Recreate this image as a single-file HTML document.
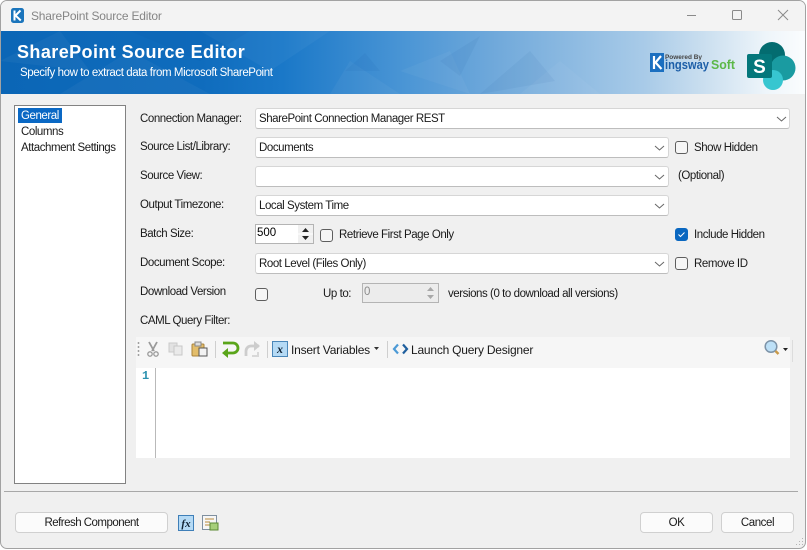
<!DOCTYPE html>
<html><head><meta charset="utf-8">
<style>
html,body{margin:0;padding:0;width:807px;height:550px;overflow:hidden;background:#fff}
*{box-sizing:border-box}
#w{position:absolute;left:0;top:0;width:806px;height:549px;background:#f0f0f0;border-radius:7px;overflow:hidden;border:1px solid #a2a2a2}
#r{position:absolute;left:-1px;top:-1px;width:807px;height:550px;font-family:"Liberation Sans",sans-serif;font-size:11.5px;letter-spacing:-.44px;color:#1a1a1a}
.t{position:absolute;white-space:nowrap;line-height:14px}
.tb{font-size:12px;letter-spacing:-.22px}
.b{position:absolute;background:#fff;border:1px solid #d6d6d6;border-bottom-color:#bdbdbd;border-radius:3px}
.c{position:absolute;width:13px;height:13px;border:1px solid #5e5e5e;border-radius:3px;background:#f6f6f6}
.btn{position:absolute;background:#fbfbfb;border:1px solid #d0d0d0;border-radius:4px;text-align:center;line-height:21px;height:21px;top:512px}
svg{position:absolute;overflow:visible;letter-spacing:0}
</style></head><body>
<div id="w"><div id="r">
<div style="position:absolute;left:0;top:0;width:807px;height:31px;background:#f3f3f3"></div>
<div style="position:absolute;left:0;top:31px;width:807px;height:63px;background:linear-gradient(90deg,#0b66b6 0,#0f6cbd 25%,#1a78c8 35%,#4a95d5 50%,#72aadb 62%,#a9cbe8 80%,#c9deef 87%,#eef5fa 95%,#fbfdfe 100%)"></div>
<svg style="left:0;top:31px" width="660" height="63"><path d="M60 63L130 20 210 63ZM200 0L270 40 330 0ZM0 30L60 0 90 40ZM330 63L350 30 400 63ZM400 40L450 20 470 63ZM520 63L560 30 600 63Z" fill="#fff" opacity=".04"/><path d="M130 0L200 30 250 0ZM345 40L365 22 380 40ZM440 30L480 5 460 45ZM480 63L530 20 555 50Z" fill="#003f80" opacity=".05"/></svg>
<svg style="left:11px;top:8px" width="13" height="15"><rect width="13" height="15" rx="2.500" fill="#1b75bc"/><path d="M3.500 2.500V12.500M9.500 2.500L4.500 7.500 9.800 12.500" stroke="#fff" stroke-width="2" fill="none"/></svg>
<div class="t" style="left:31px;top:9px;color:#858585;font-size:12px;letter-spacing:-.2px">SharePoint Source Editor</div>
<svg style="left:685px;top:9px" width="110" height="14"><path d="M2 6.500H11" stroke="#8a8a8a" stroke-width="1"/><rect x="47.500" y="1.500" width="9" height="9" rx="1" fill="none" stroke="#8a8a8a"/><path d="M93 1L103 11M103 1L93 11" stroke="#8a8a8a"/></svg>
<div class="t" style="left:17px;top:42px;color:#fff;font-size:18px;font-weight:bold;line-height:20px;letter-spacing:.42px">SharePoint Source Editor</div>
<div class="t" style="left:20px;top:66px;color:#fff;font-size:11.5px;letter-spacing:-.41px">Specify how to extract data from Microsoft SharePoint</div>
<svg style="left:649px;top:42px" width="150" height="50">
<rect x="1" y="11" width="14" height="19" fill="#1b6fc0"/><path d="M5 14V27M12 14L6.500 20.500 12.500 27" stroke="#fff" stroke-width="2.200" fill="none"/>
<text x="16" y="17" font-family="Liberation Sans" font-size="6.500" font-weight="bold" fill="#444" textLength="37" lengthAdjust="spacingAndGlyphs">Powered By</text>
<text x="16" y="27" font-family="Liberation Sans" font-size="13" font-weight="bold" fill="#1d5fa8" textLength="44" lengthAdjust="spacingAndGlyphs">ingsway</text>
<text x="62" y="27" font-family="Liberation Sans" font-size="13" font-weight="bold" fill="#5cb848" textLength="24" lengthAdjust="spacingAndGlyphs">Soft</text>
<circle cx="123" cy="13" r="13" fill="#036c70"/><circle cx="134" cy="26" r="12.500" fill="#1a9ba1"/><circle cx="124" cy="38" r="10" fill="#37c6d0"/>
<rect x="98" y="12" width="25" height="24" rx="2" fill="#04777b"/>
<text x="110.500" y="31" text-anchor="middle" font-family="Liberation Sans" font-size="19" font-weight="bold" fill="#fff">S</text></svg>

<div style="position:absolute;left:14px;top:105px;width:112px;height:379px;background:#fff;border:1px solid #828282"></div>
<div style="position:absolute;left:18px;top:108px;width:44px;height:15px;background:#0a68c4"></div>
<div class="t" style="left:21px;top:109px;color:#fff">General</div>
<div class="t" style="left:21px;top:125px">Columns</div>
<div class="t" style="left:21px;top:141px">Attachment Settings</div>

<div class="t" style="left:140px;top:112px">Connection Manager:</div>
<div class="t" style="left:140px;top:140px">Source List/Library:</div>
<div class="t" style="left:140px;top:169px">Source View:</div>
<div class="t" style="left:140px;top:198px">Output Timezone:</div>
<div class="t" style="left:140px;top:227px">Batch Size:</div>
<div class="t" style="left:140px;top:256px">Document Scope:</div>
<div class="t" style="left:140px;top:285px">Download Version</div>
<div class="t" style="left:140px;top:314px">CAML Query Filter:</div>

<div class="b" style="left:255px;top:108px;width:535px;height:21px"></div>
<div class="t" style="left:259px;top:112px">SharePoint Connection Manager REST</div>
<div class="b" style="left:255px;top:137px;width:414px;height:21px"></div>
<div class="t" style="left:259px;top:141px">Documents</div>
<div class="b" style="left:255px;top:166px;width:414px;height:21px"></div>
<div class="b" style="left:255px;top:195px;width:414px;height:21px"></div>
<div class="t" style="left:259px;top:199px">Local System Time</div>
<div class="b" style="left:255px;top:253px;width:414px;height:21px"></div>
<div class="t" style="left:259px;top:257px">Root Level (Files Only)</div>
<svg style="left:0;top:0" width="807" height="300"><path d="M777 117l4.500 4 4.500-4M655 146l4.500 4 4.500-4M655 175l4.500 4 4.500-4M655 204l4.500 4 4.500-4M655 262l4.500 4 4.500-4" stroke="#666" fill="none"/></svg>

<div style="position:absolute;left:255px;top:224px;width:59px;height:20px;background:#fff;border:1px solid #b4b4b4"></div>
<div class="t" style="left:257px;top:226px;color:#000;letter-spacing:0">500</div>
<svg style="left:298px;top:225px" width="15" height="18"><rect width="15" height="18" fill="#f0f0f0"/><path d="M0 9H15" stroke="#fff"/><path d="M7.500 3L4 7H11ZM7.500 15L4 11H11Z" fill="#222"/></svg>
<div class="c" style="left:320px;top:229px"></div>
<div class="t" style="left:339px;top:228px">Retrieve First Page Only</div>

<div class="c" style="left:675px;top:141px"></div>
<div class="t" style="left:694px;top:141px">Show Hidden</div>
<div class="t" style="left:678px;top:169px">(Optional)</div>
<div class="c" style="left:675px;top:228px;background:#0a67c0;border-color:#0a67c0"></div>
<svg style="left:675px;top:228px" width="13" height="13"><path d="M3.500 6.500L5.500 8.500 9.500 4.500" stroke="#fff" fill="none"/></svg>
<div class="t" style="left:694px;top:228px">Include Hidden</div>
<div class="c" style="left:675px;top:257px"></div>
<div class="t" style="left:694px;top:257px">Remove ID</div>

<div class="c" style="left:255px;top:288px"></div>
<div class="t" style="left:323px;top:287px">Up to:</div>
<div style="position:absolute;left:362px;top:283px;width:77px;height:20px;background:#ececec;border:1px solid #b4b4b4"></div>
<div class="t" style="left:364px;top:285px;color:#8c8c8c">0</div>
<svg style="left:423px;top:284px" width="15" height="18"><path d="M7.500 3L4 7H11ZM7.500 15L4 11H11Z" fill="#a8a8a8"/></svg>
<div class="t" style="left:448px;top:287px">versions (0 to download all versions)</div>

<div style="position:absolute;left:136px;top:337px;width:654px;height:31px;background:#f6f6f6"></div>
<div style="position:absolute;left:136px;top:368px;width:654px;height:90px;background:#fff"></div>
<div style="position:absolute;left:155px;top:368px;width:1px;height:90px;background:#b9b9b9"></div>
<div class="t" style="left:142px;top:369px;color:#2b91af;font-weight:bold;font-family:'Liberation Mono',monospace;font-size:12px;letter-spacing:0">1</div>
<svg style="left:136px;top:338px" width="654" height="24">
<path d="M2.500 4v2M2.500 8v2M2.500 12v2M2.500 16v2" stroke="#a0a0a0" stroke-width="1.500"/>
<path d="M13 4l5 9M21 4l-5 9" stroke="#9a9a9a" stroke-width="1.800"/><circle cx="14" cy="16" r="2.200" fill="none" stroke="#9a9a9a" stroke-width="1.300"/><circle cx="20" cy="16" r="2.200" fill="none" stroke="#9a9a9a" stroke-width="1.300"/>
<rect x="33" y="5" width="8" height="9" fill="#e2e2e2" stroke="#cacaca"/><rect x="38" y="8" width="8" height="9" fill="#eaeaea" stroke="#c8c8c8"/>
<rect x="56" y="6" width="12" height="12" rx="1" fill="#e3bd6a" stroke="#a9823a"/><rect x="59" y="4" width="6" height="4" fill="#ddd" stroke="#888"/><rect x="63" y="10" width="8" height="8" fill="#f2f2f2" stroke="#555"/>
<path d="M79.500 3v17" stroke="#cfcfcf"/>
<path d="M87 5h10a4.500 4.500 0 0 1 0 10h-8" fill="none" stroke="#5aa51a" stroke-width="2.800"/><path d="M92 10l-6 5 6 5z" fill="#5aa51a"/>
<path d="M123 8h-8a5 5 0 0 0-5 5v5" fill="none" stroke="#cdcdcd" stroke-width="2.800"/><path d="M118 3l6 5-6 5z" fill="#cdcdcd"/><path d="M122 14v4h-6" fill="none" stroke="#d8d8d8" stroke-width="2"/>
<path d="M131.500 3v17" stroke="#cfcfcf"/>
<rect x="136.500" y="3.500" width="15" height="15" fill="#b5daf5" stroke="#4a86b8"/><text x="144" y="15" text-anchor="middle" font-family="Liberation Serif" font-style="italic" font-weight="bold" font-size="12" fill="#123">x</text>
<path d="M238 9h5l-2.500 3z" fill="#333"/>
<path d="M251.500 3v17" stroke="#cfcfcf"/>
<path d="M262 6.500l-4 4.500 4 4.500" fill="none" stroke="#4c9ad6" stroke-width="2.200"/><path d="M267 6.500l4 4.500-4 4.500" fill="none" stroke="#1f5f9e" stroke-width="2.200"/>
<circle cx="635" cy="8.500" r="5.800" fill="#bde0f7" stroke="#7d93a8" stroke-width="1.500"/><path d="M639.500 13l3 3" stroke="#c99a4a" stroke-width="2.500"/><path d="M647 10h5l-2.500 3z" fill="#222"/>
</svg>
<div style="position:absolute;left:792px;top:340px;width:1px;height:22px;background:#dcdcdc"></div>
<div class="t tb" style="left:291px;top:343px">Insert Variables</div>
<div class="t tb" style="left:411px;top:343px">Launch Query Designer</div>

<div style="position:absolute;left:4px;top:491px;width:794px;height:1px;background:#a8a8a8"></div>
<div class="btn" style="left:15px;width:153px;letter-spacing:-.52px">Refresh Component</div>
<svg style="left:178px;top:515px" width="42" height="17">
<rect x=".5" y=".5" width="15" height="15" fill="#b5daf5" stroke="#3f7fb8"/><text x="8" y="12" text-anchor="middle" font-family="Liberation Serif" font-style="italic" font-weight="bold" font-size="11" fill="#123">fx</text>
<rect x="24.500" y=".5" width="14" height="14" fill="#f6f6f6" stroke="#7f8f9f"/><path d="M27 4h9M27 7h5M27 10h5" stroke="#b98a3a"/><rect x="32" y="8" width="8" height="7" fill="#a6cf7a" stroke="#5b8a35"/>
</svg>
<div class="btn" style="left:640px;width:73px">OK</div>
<div class="btn" style="left:721px;width:73px">Cancel</div>
<svg style="left:795px;top:537px" width="10" height="10"><path d="M7.500 1v1M7.500 4v1M4.500 4v1M7.500 7v1M4.500 7v1M1.500 7v1" stroke="#b5b5b5"/></svg>
</div></div>
</body></html>
